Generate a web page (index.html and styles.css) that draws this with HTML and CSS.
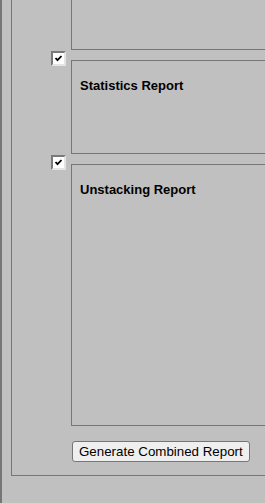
FILE: index.html
```html
<!DOCTYPE html>
<html lang="en">
  <head>
    <meta charset="UTF-8" />
    <meta name="viewport" content="width=device-width, initial-scale=1.0" />
    <title>Reports</title>

    <link rel="stylesheet" href="styles.css">
  </head>
  <body>
    <div class="frame">
      <div class="panel">
        <div class="prev"></div>

        <div class="item">
          <span class="check">
            <svg width="11" height="11" viewBox="0 0 11 11">
              <path d="M2.5 5 L4.5 7.2 L8.5 3" fill="none" stroke="#000" stroke-width="1.8" />
            </svg>
          </span>
          <div class="box">
            <h3>Statistics Report</h3>
          </div>
        </div>

        <div class="item">
          <span class="check">
            <svg width="11" height="11" viewBox="0 0 11 11">
              <path d="M2.5 5 L4.5 7.2 L8.5 3" fill="none" stroke="#000" stroke-width="1.8" />
            </svg>
          </span>
          <div class="box tall">
            <h3>Unstacking Report</h3>
          </div>
        </div>

        <div class="actions">
          <button>Generate Combined Report</button>
        </div>
      </div>
    </div>
  </body>
</html>
```

FILE: styles.css
```css
* {
  box-sizing: border-box;
  margin: 0;
  padding: 0;
}

body {
  background-color: #c0c0c0;
  font-family: "Liberation Sans", Arial, sans-serif;
  overflow: hidden;
}

.frame {
  border-left: 2px solid #767676;
  min-height: 100vh;
  padding-left: 9px;
}

.panel {
  border-left: 1px solid #767676;
  border-bottom: 1px solid #767676;
}

.prev {
  margin-left: 59px;
  height: 50px;
  border-left: 1px solid #767676;
  border-bottom: 1px solid #767676;
}

.item {
  display: flex;
  margin-top: 1px;
  padding-left: 39px;
}

.check {
  flex: none;
  width: 15px;
  height: 15px;
  display: flex;
  align-items: center;
  justify-content: center;
  background: #fff;
  border-top: 2px solid #7a7a7a;
  border-left: 2px solid #7a7a7a;
  border-right: 2px solid #e4e4e4;
  border-bottom: 2px solid #e4e4e4;
}

.box {
  flex: 1;
  margin-left: 5px;
  margin-top: 9px;
  height: 94px;
  border: 1px solid #767676;
  border-right: none;
  padding: 17px 8px 0;
}

.box.tall {
  height: 262px;
}

.box h3 {
  font-size: 13px;
  font-weight: bold;
  color: #000;
}

.actions {
  padding: 15px 0 13px 60px;
}

button {
  font-family: "Liberation Sans", Arial, sans-serif;
  font-size: 13.333px;
  height: 21px;
  padding: 1px 6px;
  background-color: #efefef;
  color: #000;
  border: 1px solid #767676;
  border-radius: 3px;
}
```
